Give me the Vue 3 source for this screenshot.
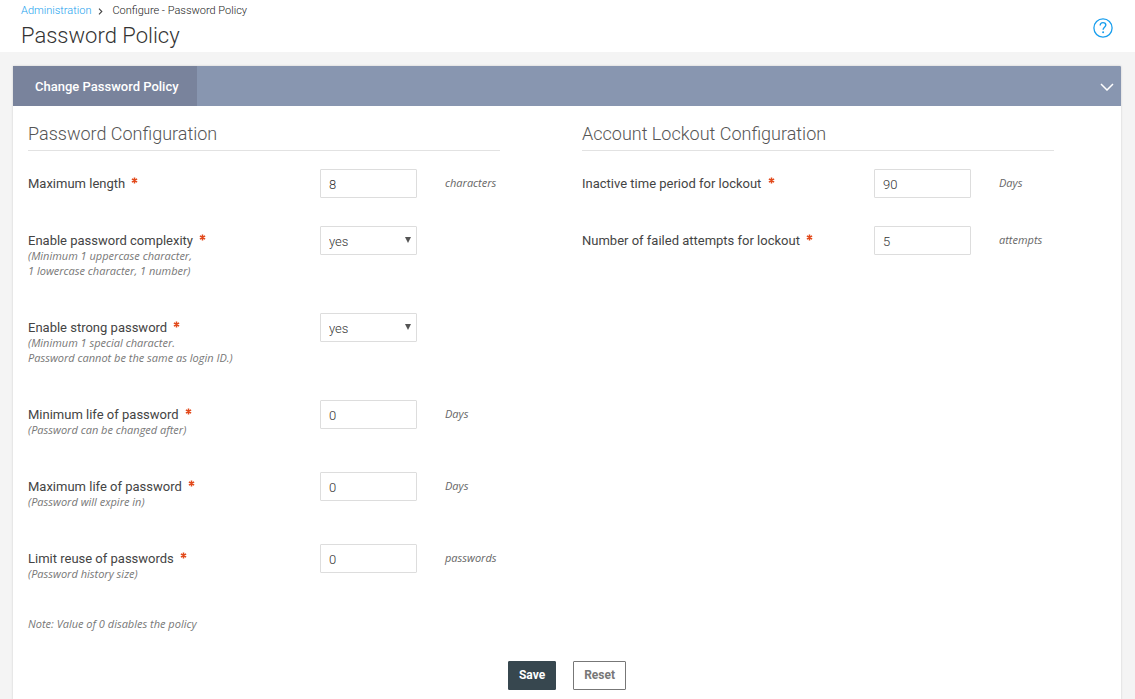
<script setup>
import { ref } from 'vue'

const sections = ref([
  {
    title: 'Password Configuration',
    note: 'Note: Value of 0 disables the policy',
    fields: [
      { id: 'max-length', label: 'Maximum length', hints: [], type: 'text', value: '8', unit: 'characters' },
      {
        id: 'complexity',
        label: 'Enable password complexity',
        hints: ['(Minimum 1 uppercase character,', '1 lowercase character, 1 number)'],
        type: 'select',
        value: 'yes',
        unit: ''
      },
      {
        id: 'strong',
        label: 'Enable strong password',
        hints: ['(Minimum 1 special character.', 'Password cannot be the same as login ID.)'],
        type: 'select',
        value: 'yes',
        unit: ''
      },
      { id: 'min-life', label: 'Minimum life of password', hints: ['(Password can be changed after)'], type: 'text', value: '0', unit: 'Days' },
      { id: 'max-life', label: 'Maximum life of password', hints: ['(Password will expire in)'], type: 'text', value: '0', unit: 'Days' },
      { id: 'reuse', label: 'Limit reuse of passwords', hints: ['(Password history size)'], type: 'text', value: '0', unit: 'passwords' }
    ]
  },
  {
    title: 'Account Lockout Configuration',
    note: '',
    fields: [
      { id: 'inactive', label: 'Inactive time period for lockout', hints: [], type: 'text', value: '90', unit: 'Days' },
      { id: 'failed', label: 'Number of failed attempts for lockout', hints: [], type: 'text', value: '5', unit: 'attempts' }
    ]
  }
])
</script>

<template>
  <div class="page">
    <header class="top">
      <div>
        <nav class="crumbs" aria-label="Breadcrumb">
          <a href="#">Administration</a>
          <svg class="sep" width="5" height="7" viewBox="0 0 5 7" aria-hidden="true">
            <path d="M1 0.7 3.8 3.5 1 6.3" fill="none" stroke="#444" stroke-width="1.1" />
          </svg>
          <span>Configure - Password Policy</span>
        </nav>
        <h1>Password Policy</h1>
      </div>
      <button class="help" type="button" aria-label="Help">
        <svg width="20" height="20" viewBox="0 0 20 20" fill="none" stroke="#1a9fee">
          <circle cx="10" cy="10" r="9.1" stroke-width="1.3" />
          <path d="M7.2 7.5C7.2 5.6 8.4 4.6 10 4.6c1.7 0 2.8 1 2.8 2.5 0 2.1-2.7 2.3-2.7 4.7" stroke-width="1.4" />
          <circle cx="10.1" cy="14.3" r="1" fill="#1a9fee" stroke="none" />
        </svg>
      </button>
    </header>

    <main class="card">
      <div class="bar">
        <h2>Change Password Policy</h2>
        <button class="toggle" type="button" aria-label="Collapse section">
          <svg width="14" height="8" viewBox="0 0 14 8" aria-hidden="true">
            <path d="M1 1l6 6 6-6" fill="none" stroke="#fff" stroke-width="1.5" />
          </svg>
        </button>
      </div>

      <form @submit.prevent>
        <div class="sections">
          <section v-for="s in sections" :key="s.title">
            <h3>{{ s.title }}</h3>
            <div v-for="f in s.fields" :key="f.id" class="row">
              <label :for="f.id">
                <span class="name">{{ f.label }}
                  <svg class="req" width="7" height="7" viewBox="0 0 7 7" aria-hidden="true">
                    <path d="M3.5 0.4v6.2M0.9 1.9l5.2 3.2M6.1 1.9L0.9 5.1" stroke="#e2491b" stroke-width="1.5" />
                  </svg>
                </span>
                <span v-for="h in f.hints" :key="h" class="hint">{{ h }}</span>
              </label>
              <div v-if="f.type === 'select'" class="pick">
                <select :id="f.id" v-model="f.value">
                  <option>yes</option>
                  <option>no</option>
                </select>
                <svg class="arrow" width="6" height="6" viewBox="0 0 6 6" aria-hidden="true">
                  <path d="M0 0h6L3 6z" fill="#555" />
                </svg>
              </div>
              <input v-else :id="f.id" v-model="f.value" type="text">
              <span class="unit">{{ f.unit }}</span>
            </div>
            <p v-if="s.note" class="note">{{ s.note }}</p>
          </section>
        </div>
        <div class="actions">
          <button class="btn save" type="submit">Save</button>
          <button class="btn reset" type="reset">Reset</button>
        </div>
      </form>
    </main>
  </div>
</template>

<style>
html {
  height: 100%;
  overflow: hidden;
}
body {
  margin: 0;
  min-height: 100%;
  background: #f4f4f4;
}
</style>

<style scoped>
.page {
  font-family: Roboto, "Liberation Sans", sans-serif;
  font-size: 13px;
  line-height: 16px;
  color: #444;
}
.page * {
  box-sizing: border-box;
}
.top {
  display: flex;
  justify-content: space-between;
  align-items: flex-start;
  height: 52px;
  padding: 3px 22px 0 21px;
  background: #fff;
}
.crumbs {
  display: flex;
  align-items: center;
  font-size: 11px;
  font-weight: 300;
  color: #222;
}
.crumbs a {
  color: #1a9fee;
  text-decoration: none;
}
.sep {
  margin: 0 9px 0 7px;
}
h1 {
  margin: 3px 0 0;
  font-size: 22px;
  line-height: 28px;
  font-weight: 300;
  color: #333;
}
.help {
  display: block;
  margin-top: 15px;
  padding: 0;
  border: 0;
  background: none;
}
.help svg {
  display: block;
}
.card {
  margin: 14px 14px 0 13px;
  background: #fff;
  box-shadow: 0 0 2px rgba(0, 0, 0, 0.16);
}
.bar {
  display: flex;
  justify-content: space-between;
  align-items: center;
  height: 40px;
  padding-right: 7px;
  background: #8896b0;
  border-radius: 1px 1px 0 0;
}
.bar h2 {
  margin: 0;
  padding: 2px 18px 0 22px;
  background: #79839c;
  font-size: 13px;
  line-height: 38px;
  font-weight: 500;
  color: #fff;
}
.toggle {
  padding: 2px 0 0;
  border: 0;
  background: none;
}
.toggle svg {
  display: block;
}
.sections {
  display: grid;
  grid-template-columns: 1fr 1fr;
}
section {
  padding: 16px 67px 0 15px;
}
h3 {
  margin: 0 0 18px;
  padding-bottom: 5px;
  border-bottom: 1px solid #e2e2e2;
  font-size: 18px;
  line-height: 23px;
  font-weight: 300;
  color: #555;
}
.row {
  display: grid;
  grid-template-columns: 292fr 97fr 83fr;
  align-items: start;
}
label {
  padding: 7px 0 35px;
}
.name,
.hint {
  display: block;
  white-space: nowrap;
}
.name {
  height: 15px;
}
.req {
  margin-left: 3px;
  vertical-align: 4px;
}
.hint,
.unit,
.note {
  font-family: "Open Sans", "Noto Sans", sans-serif;
  font-style: italic;
  font-size: 11px;
  line-height: 15px;
  color: #777;
}
.unit {
  padding: 6px 0 0 28px;
  color: #666;
}
.note {
  margin: 0;
}
input,
select {
  width: 100%;
  height: 29px;
  padding: 2px 8px 0;
  border: 1px solid #ddd;
  border-radius: 1px;
  background: #fff;
  font-family: inherit;
  font-size: 13px;
  font-weight: 300;
  color: #333;
  appearance: none;
}
.pick {
  position: relative;
}
.arrow {
  position: absolute;
  right: 6px;
  top: 11px;
  pointer-events: none;
}
.actions {
  display: flex;
  justify-content: center;
  gap: 17px;
  padding: 30px 0 40px;
}
.btn {
  height: 29px;
  padding: 0 10px 1px;
  border: 1px solid #37474f;
  border-radius: 1px;
  font-family: inherit;
  font-size: 12px;
}
.save {
  background: #37474f;
  font-weight: 700;
  color: #fff;
}
.reset {
  border-color: #777;
  background: #fff;
  font-weight: 700;
  color: #777;
}
</style>
